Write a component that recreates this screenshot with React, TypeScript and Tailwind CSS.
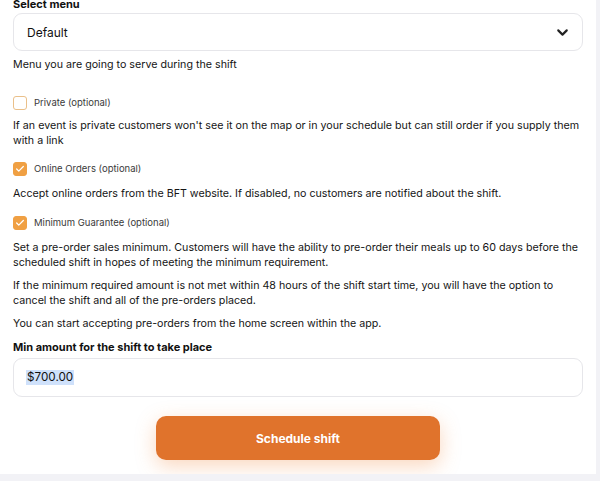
import React, { useState } from 'react'
import { ChevronDown, Check } from 'lucide-react'

const font = { fontFamily: 'Inter, "Noto Sans", sans-serif' }

interface OptionProps {
  label: string
  checked: boolean
  onToggle: () => void
}

const OptionCheckbox: React.FC<OptionProps> = ({ label, checked, onToggle }) => (
  <button type="button" onClick={onToggle} className="flex h-[14px] items-center gap-[7px] text-left">
    <span
      className={`flex h-[14px] w-[14px] items-center justify-center rounded-[3px] border ${
        checked ? 'border-[#f0a043] bg-[#f0a043]' : 'border-[#eac08a] bg-white'
      }`}
    >
      {checked && <Check className="h-[10px] w-[10px] text-white" strokeWidth={3} />}
    </span>
    <span className="text-[9.5px] leading-[14px] text-[#3a3a3a]">{label}</span>
  </button>
)

export default function App() {
  const [isPrivate, setIsPrivate] = useState(false)
  const [online, setOnline] = useState(true)
  const [minimum, setMinimum] = useState(true)

  return (
    <div className="h-[481px] w-[600px] overflow-hidden bg-[#f2f2f6]" style={font}>
      <div className="h-[474px] w-[596px] overflow-hidden bg-white px-[13px] text-[10.7px] leading-[15px] text-[#151515]">
        <div className="-mt-[3px] text-[11px] font-bold leading-[15px] text-[#111]">Select menu</div>

        <div className="mt-[1px] flex h-[38px] items-center justify-between rounded-[9px] border border-[#e6e6ea] pl-[13px] pr-[11px]">
          <span className="text-[12px] text-[#111]">Default</span>
          <ChevronDown className="h-[17px] w-[17px] text-[#222]" strokeWidth={3} />
        </div>

        <p className="mt-[6px]">Menu you are going to serve during the shift</p>

        <div className="mt-[24px]">
          <OptionCheckbox label="Private (optional)" checked={isPrivate} onToggle={() => setIsPrivate(!isPrivate)} />
        </div>
        <p className="mt-[8px]">
          If an event is private customers won't see it on the map or in your schedule but can still order if you supply them
          with a link
        </p>

        <div className="mt-[14px]">
          <OptionCheckbox label="Online Orders (optional)" checked={online} onToggle={() => setOnline(!online)} />
        </div>
        <p className="mt-[10px]">
          Accept online orders from the BFT website. If disabled, no customers are notified about the shift.
        </p>

        <div className="mt-[15px]">
          <OptionCheckbox label="Minimum Guarantee (optional)" checked={minimum} onToggle={() => setMinimum(!minimum)} />
        </div>
        <p className="mt-[10px]">
          Set a pre-order sales minimum. Customers will have the ability to pre-order their meals up to 60 days before the
          scheduled shift in hopes of meeting the minimum requirement.
        </p>
        <p className="mt-[8px]">
          If the minimum required amount is not met within 48 hours of the shift start time, you will have the option to
          cancel the shift and all of the pre-orders placed.
        </p>
        <p className="mt-[8px]">You can start accepting pre-orders from the home screen within the app.</p>

        <div className="mt-[9px] text-[11px] font-bold leading-[15px] text-[#111]">Min amount for the shift to take place</div>
        <div className="mt-[3px] flex h-[39px] items-center rounded-[9px] border border-[#e6e6ea] pl-[12px]">
          <span className="bg-[#cfe1fb] px-[1px] text-[11.7px] text-[#111]">$700.00</span>
        </div>

        <div className="mt-[19px] flex justify-center">
          <button
            type="button"
            className="h-[44px] w-[284px] rounded-[10px] bg-[#e0732c] text-[12px] font-bold text-white shadow-[0_6px_20px_rgba(240,140,70,0.35)]"
          >
            Schedule shift
          </button>
        </div>
      </div>
    </div>
  )
}
